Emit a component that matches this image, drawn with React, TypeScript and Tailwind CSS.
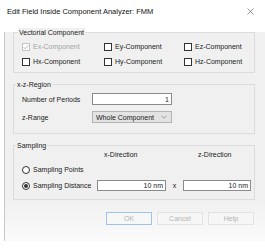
import React from 'react'

function Check({ checked, disabled, label }: { checked?: boolean; disabled?: boolean; label: string }) {
  return (
    <div className="flex items-center gap-[3px] h-[9px]">
      <span
        className={
          'w-[8px] h-[8px] border bg-white flex items-center justify-center ' +
          (disabled ? 'border-[#c4c4c4]' : 'border-[#333333]')
        }
      >
        {checked && (
          <svg width="6" height="6" viewBox="0 0 6 6">
            <path d="M0.6 3.1 L2.3 4.8 L5.4 1.2" fill="none" stroke={disabled ? '#a8a8a8' : '#333'} strokeWidth="0.8" />
          </svg>
        )}
      </span>
      <span className={disabled ? 'text-[#a5a5a5]' : 'text-[#1a1a1a]'}>{label}</span>
    </div>
  )
}

function Radio({ selected, label }: { selected?: boolean; label: string }) {
  return (
    <div className="flex items-center gap-[3px] w-[75px]">
      <span className="w-[8px] h-[8px] rounded-full border border-[#333333] bg-white flex items-center justify-center">
        {selected && <span className="w-[4px] h-[4px] rounded-full bg-[#333333]" />}
      </span>
      <span>{label}</span>
    </div>
  )
}

function Group({ title, titleLeft, className, children }: { title: string; titleLeft: string; className?: string; children: React.ReactNode }) {
  return (
    <div className={'relative border border-[#dcdcdc] ' + (className ?? '')}>
      <span className={'absolute top-[-5px] px-[1px] bg-[#f0f0f0] leading-[9px] text-[#1a1a1a] ' + titleLeft}>{title}</span>
      {children}
    </div>
  )
}

function Field({ value, className }: { value: string; className?: string }) {
  return (
    <div className={'h-[11px] bg-white border border-[#8a8a8a] flex items-center justify-end pr-[2px] ' + (className ?? '')}>
      {value}
    </div>
  )
}

function Btn({ label, primary }: { label: string; primary?: boolean }) {
  return (
    <div
      className={
        'w-[46px] h-[13px] flex items-center justify-center text-[#b3b3b3] border ' +
        (primary ? 'border-[#9cc3ea] bg-[#f7f7f7]' : 'border-[#e3e3e3] bg-[#f6f6f6]')
      }
    >
      {label}
    </div>
  )
}

export default function App() {
  return (
    <div className="w-[265px] h-[248px] bg-white font-['Liberation_Sans',Arial,sans-serif] text-[7px] leading-[9px] text-[#1a1a1a] overflow-hidden">
      {/* タイトルバー */}
      <div className="h-[23px] flex items-center justify-between pl-[7px] pr-[11px]">
        <span className="text-[7.5px] text-[#111]">Edit Field Inside Component Analyzer: FMM</span>
        <svg width="7" height="7" viewBox="0 0 7 7">
          <path d="M0.5 0.5 L6.5 6.5 M6.5 0.5 L0.5 6.5" stroke="#6a6a6a" strokeWidth="0.7" />
        </svg>
      </div>

      {/* 本体 */}
      <div className="ml-[4px] h-[209px] border-l border-[#c8c8c8] bg-gradient-to-b from-[#f0f0f0] from-[80%] to-[#fbfbfb] pl-[8px] pr-[10px]">
        <Group title="Vectorial Component" titleLeft="left-[4px]" className="mt-[9px] pt-[9px] pb-[6px] pl-[8px]">
          <div className="grid grid-cols-[82px_80px_1fr] gap-y-[6px]">
            <Check checked disabled label="Ex-Component" />
            <Check label="Ey-Component" />
            <Check label="Ez-Component" />
            <Check label="Hx-Component" />
            <Check label="Hy-Component" />
            <Check label="Hz-Component" />
          </div>
        </Group>

        <Group title="x-z-Region" titleLeft="left-[2px]" className="mt-[11px] pt-[8px] pb-[10px] pl-[8px]">
          <div className="flex items-center h-[12px]">
            <span className="w-[70px]">Number of Periods</span>
            <Field value="1" className="w-[80px] h-[12px]" />
          </div>
          <div className="flex items-center h-[12px] mt-[6px]">
            <span className="w-[70px]">z-Range</span>
            <div className="w-[80px] h-[12px] bg-[#e3e3e3] border border-[#b4b4b4] flex items-center justify-between pl-[3px] pr-[4px]">
              <span>Whole Component</span>
              <svg width="6" height="4" viewBox="0 0 6 4">
                <path d="M0.5 0.8 L3 3.2 L5.5 0.8" fill="none" stroke="#777" strokeWidth="0.7" />
              </svg>
            </div>
          </div>
        </Group>

        <Group title="Sampling" titleLeft="left-[2px]" className="mt-[11px] pt-[4px] pb-[8px] pl-[8px] pr-[2px]">
          <div className="flex h-[9px]">
            <span className="ml-[82px] w-[94px]">x-Direction</span>
            <span>z-Direction</span>
          </div>
          <div className="flex items-center h-[9px] mt-[6px]">
            <Radio label="Sampling Points" />
          </div>
          <div className="flex items-center mt-[6px]">
            <Radio selected label="Sampling Distance" />
            <Field value="10 nm" className="w-[69px]" />
            <span className="w-[17px] text-center">x</span>
            <Field value="10 nm" className="w-[68px]" />
          </div>
        </Group>

        <div className="flex justify-end gap-[5px] mt-[12px] pr-[1px]">
          <Btn label="OK" primary />
          <Btn label="Cancel" />
          <Btn label="Help" />
        </div>
      </div>
    </div>
  )
}
